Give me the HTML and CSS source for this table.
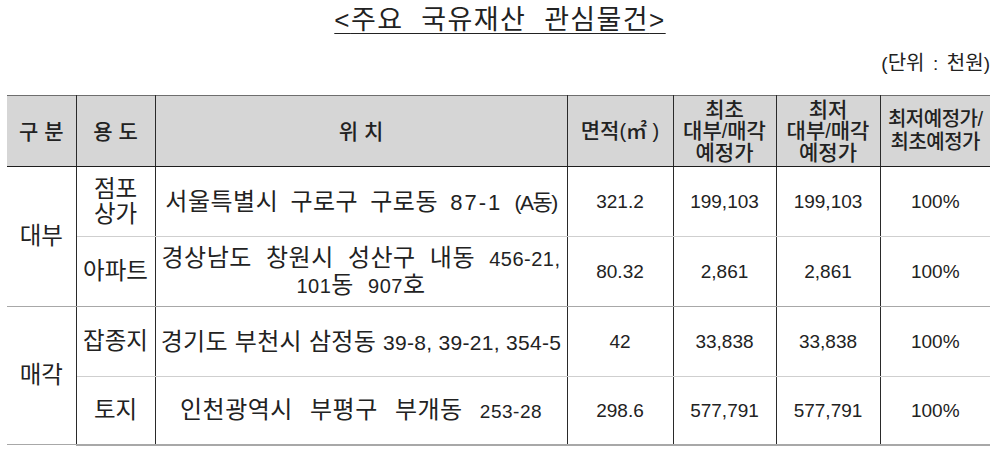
FILE: index.html
```html
<!DOCTYPE html>
<html lang="ko">
<head>
<meta charset="utf-8">
<link rel="stylesheet" href="styles.css">
</head>
<body>
<div class="page">
  <h1 class="title"><span class="u"><span class="n">&lt;</span>주요 국유재산 관심물건<span class="n">&gt;</span></span></h1>
  <div class="unit"><span class="n">(</span>단위 <span class="n">:</span> 천원<span class="n">)</span></div>
  <table class="grid">
    <colgroup>
      <col class="c1"><col class="c2"><col class="c3"><col class="c4"><col class="c5"><col class="c6"><col class="c7">
    </colgroup>
    <thead>
      <tr>
        <th class="first">구 분</th>
        <th>용 도</th>
        <th>위 치</th>
        <th>면적<span class="n">(</span>㎡<span class="n"> )</span></th>
        <th>최초<br>대부<span class="n">/</span>매각<br>예정가</th>
        <th>최저<br>대부<span class="n">/</span>매각<br>예정가</th>
        <th class="last narrow">최저예정가<span class="n">/</span><br>최초예정가</th>
      </tr>
    </thead>
    <tbody>
      <tr>
        <td class="first" rowspan="2">대부</td>
        <td class="use">점포<br>상가</td>
        <td class="addr r1">서울특별시 구로구 구로동 <span class="n wide">87-1</span> <span class="tight"><span class="n">(A</span>동<span class="n">)</span></span></td>
        <td class="num">321.2</td>
        <td class="num">199,103</td>
        <td class="num">199,103</td>
        <td class="num last">100%</td>
      </tr>
      <tr class="grp-end">
        <td class="use">아파트</td>
        <td class="addr r2">경상남도 창원시 성산구 내동 <span class="n">456-21,</span><br><span class="n">101</span>동 <span class="n">907</span>호</td>
        <td class="num">80.32</td>
        <td class="num">2,861</td>
        <td class="num">2,861</td>
        <td class="num last">100%</td>
      </tr>
      <tr>
        <td class="first" rowspan="2">매각</td>
        <td class="use">잡종지</td>
        <td class="addr r3">경기도 부천시 삼정동 <span class="n">39-8, 39-21, 354-5</span></td>
        <td class="num">42</td>
        <td class="num">33,838</td>
        <td class="num">33,838</td>
        <td class="num last">100%</td>
      </tr>
      <tr class="bottom">
        <td class="use">토지</td>
        <td class="addr r4">인천광역시 부평구 부개동 <span class="n">253-28</span></td>
        <td class="num">298.6</td>
        <td class="num">577,791</td>
        <td class="num">577,791</td>
        <td class="num last">100%</td>
      </tr>
    </tbody>
  </table>
</div>
</body>
</html>
```

FILE: styles.css
```css
html, body {
  margin: 0;
  padding: 0;
  background: #ffffff;
}
body {
  font-family: "Liberation Sans", "Noto Sans CJK KR", sans-serif;
  color: #222222;
}
.page {
  width: 1000px;
  height: 455px;
  overflow: hidden;
}
.n {
  font-size: 19px;
}
.title {
  margin: 0;
  padding-top: 4px;
  height: 36px;
  font-size: 27px;
  line-height: 32px;
  font-weight: 400;
  text-align: center;
  letter-spacing: 1.4px;
  word-spacing: 9px;
}
.title .n {
  font-size: 26px;
}
.title .u {
  text-decoration: underline;
  text-decoration-thickness: 1px;
  text-underline-offset: 4px;
}
.unit {
  height: 55px;
  padding-right: 10px;
  text-align: right;
  font-size: 20px;
  line-height: 46px;
  word-spacing: 3px;
}
.grid {
  margin-left: 7px;
  border-collapse: collapse;
  table-layout: fixed;
  width: 983px;
  font-size: 23.5px;
}
.c1 { width: 69px; }
.c2 { width: 79px; }
.c3 { width: 412px; }
.c4 { width: 106px; }
.c5 { width: 103px; }
.c6 { width: 104px; }
.c7 { width: 110px; }
.grid th, .grid td {
  padding: 0;
  text-align: center;
  vertical-align: middle;
  border-left: 1.5px solid #2a2a2a;
  border-right: 1.5px solid #2a2a2a;
  white-space: nowrap;
}
.grid th.first, .grid td.first { border-left: none; }
.grid th.last, .grid td.last { border-right: none; }
.grid thead tr {
  height: 71px;
  background: #d6d6d6;
}
.grid th {
  font-size: 21px;
  font-weight: 500;
  line-height: 21px;
  border-top: 1px solid #6e6e6e;
  border-bottom: 1.5px solid #1e1e1e;
}
.grid th .n { font-size: 20px; font-weight: 400; }
.grid th.narrow {
  font-size: 20px;
  line-height: 23px;
  letter-spacing: -0.5px;
}
.grid tbody tr {
  height: 70px;
}
.grid td {
  line-height: 25px;
  border-bottom: 1px solid #cfcfcf;
}
.grid td.num {
  font-size: 19px;
}
.grid tr.grp-end td { border-bottom: 1.5px solid #a8a8a8; }
.grid td.first { border-bottom: 1.5px solid #a8a8a8; }
.grid tr.bottom td { border-bottom: 2px solid #a8a8a8; }
.grid tbody tr.bottom { height: 68px; }
.addr {
  font-size: 24px;
  letter-spacing: 0.5px;
}
.addr .n {
  font-size: 21px;
}
.r1 { word-spacing: 5px; }
.r1 .wide { font-size: 22px; letter-spacing: 2px; }
.r1 .tight { letter-spacing: -1.5px; font-size: 22px; }
.r1 .tight .n { font-size: 21px; }
.r2 { word-spacing: 7px; line-height: 21px; }
.r2 .n { font-size: 20px; }
.r3 { word-spacing: 0; letter-spacing: 0.3px; }
.r4 { word-spacing: 10px; }
.r4 .n { font-size: 19px; word-spacing: 0; }
```
